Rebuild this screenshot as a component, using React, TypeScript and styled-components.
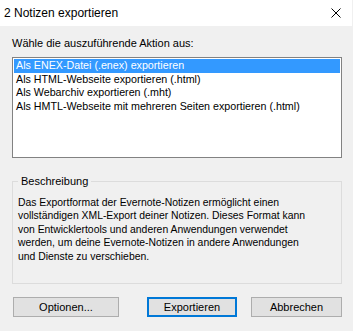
import React from "react";
import styled, { createGlobalStyle } from "styled-components";

const Global = createGlobalStyle`
  html, body { margin: 0; padding: 0; background: #f0f0f0; }
  body { width: 353px; height: 331px; overflow: hidden; }
  * { box-sizing: border-box; }
`;

const FONT = `"Liberation Sans", Arial, sans-serif`;

const Window = styled.div`
  width: 352px;
  height: 331px;
  background: #f0f0f0;
  display: flex;
  flex-direction: column;
  font-family: ${FONT};
  font-size: 11px;
  color: #000;
`;

const TitleBar = styled.div`
  height: 26px;
  background: #ffffff;
  display: flex;
  align-items: center;
  justify-content: space-between;
  padding-left: 4px;
`;

const Title = styled.span`
  font-size: 12px;
  line-height: 26px;
`;

const CloseButton = styled.div`
  width: 32px;
  height: 26px;
  display: flex;
  align-items: center;
  justify-content: center;
`;

const Body = styled.div`
  display: flex;
  flex-direction: column;
  padding: 11px 10px 0 12px;
`;

const Label = styled.div`
  line-height: 13px;
  height: 13px;
`;

const ListBox = styled.div`
  margin-top: 7px;
  height: 101px;
  border: 1px solid #828282;
  background: #ffffff;
  padding: 1px;
  display: flex;
  flex-direction: column;
`;

const ListItem = styled.div<{ $selected?: boolean }>`
  height: 13.5px;
  line-height: 13.5px;
  padding-left: 2px;
  font-size: 10.7px;
  white-space: nowrap;
  background: ${(p) => (p.$selected ? "#3399ff" : "transparent")};
  color: ${(p) => (p.$selected ? "#ffffff" : "#000000")};
`;

const GroupBox = styled.fieldset`
  margin: 17px 0 0 0;
  padding: 0 5px 0 5px;
  border: 1px solid #dcdcdc;
  height: 109px;
  min-width: 0;
`;

const Legend = styled.legend`
  padding: 0 3px;
  line-height: 13px;
`;

const Description = styled.div`
  margin-top: 8px;
  line-height: 13.4px;
  font-size: 10.4px;
`;

const Line = styled.div`
  white-space: nowrap;
`;

const ButtonRow = styled.div`
  margin-top: 13px;
  display: flex;
  padding-left: 1px;
`;

const RightButtons = styled.div`
  margin-left: auto;
  display: flex;
  gap: 14px;
`;

const Button = styled.button<{ $w: number; $default?: boolean }>`
  width: ${(p) => p.$w}px;
  height: 20px;
  padding: 0;
  margin: 0;
  font-family: ${FONT};
  font-size: 11px;
  color: #000;
  background: #e1e1e1;
  border: ${(p) => (p.$default ? "2px solid #0078d7" : "1px solid #adadad")};
  display: flex;
  align-items: center;
  justify-content: center;
`;

export default function App() {
  return (
    <>
      <Global />
      <Window>
        <TitleBar>
          <Title>2 Notizen exportieren</Title>
          <CloseButton>
            <svg width="10" height="10" viewBox="0 0 10 10">
              <path d="M0.5 0.5 L9.5 9.5 M9.5 0.5 L0.5 9.5" stroke="#000" strokeWidth="1" />
            </svg>
          </CloseButton>
        </TitleBar>
        <Body>
          <Label>Wähle die auszuführende Aktion aus:</Label>
          <ListBox>
            <ListItem $selected>Als ENEX-Datei (.enex) exportieren</ListItem>
            <ListItem>Als HTML-Webseite exportieren (.html)</ListItem>
            <ListItem>Als Webarchiv exportieren (.mht)</ListItem>
            <ListItem>Als HMTL-Webseite mit mehreren Seiten exportieren (.html)</ListItem>
          </ListBox>
          <GroupBox>
            <Legend>Beschreibung</Legend>
            <Description>
              <Line>Das Exportformat der Evernote-Notizen ermöglicht einen</Line>
              <Line>vollständigen XML-Export deiner Notizen. Dieses Format kann</Line>
              <Line>von Entwicklertools und anderen Anwendungen verwendet</Line>
              <Line>werden, um deine Evernote-Notizen in andere Anwendungen</Line>
              <Line>und Dienste zu verschieben.</Line>
            </Description>
          </GroupBox>
          <ButtonRow>
            <Button $w={106}>Optionen...</Button>
            <RightButtons>
              <Button $w={90} $default>Exportieren</Button>
              <Button $w={91}>Abbrechen</Button>
            </RightButtons>
          </ButtonRow>
        </Body>
      </Window>
    </>
  );
}
